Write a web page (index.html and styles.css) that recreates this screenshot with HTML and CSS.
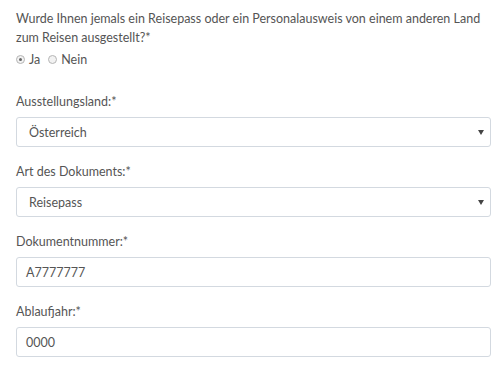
FILE: index.html
```html
<!DOCTYPE html>
<html lang="de">
<head>
<meta charset="utf-8">
<link rel="stylesheet" href="styles.css">
</head>
<body>
<form class="form">
  <p class="question">Wurde Ihnen jemals ein Reisepass oder ein Personalausweis von einem anderen Land zum Reisen ausgestellt?*</p>
  <div class="radios">
    <label class="radio"><span class="dot checked"></span>Ja</label>
    <label class="radio"><span class="dot"></span>Nein</label>
  </div>
  <div class="group">
    <div class="label">Ausstellungsland:*</div>
    <div class="field select"><span class="val">Österreich</span><span class="caret"></span></div>
  </div>
  <div class="group">
    <div class="label">Art des Dokuments:*</div>
    <div class="field select"><span class="val">Reisepass</span><span class="caret"></span></div>
  </div>
  <div class="group">
    <div class="label">Dokumentnummer:*</div>
    <div class="field input"><span class="val">A7777777</span></div>
  </div>
  <div class="group">
    <div class="label">Ablaufjahr:*</div>
    <div class="field input"><span class="val">0000</span></div>
  </div>
</form>
</body>
</html>
```

FILE: styles.css
```css
html, body {
  margin: 0;
  padding: 0;
  background: #fff;
}
body {
  font-family: Lato, "Open Sans", sans-serif;
  font-size: 12.5px;
  color: #555;
}
.form {
  padding: 9px 4px 0 16px;
}
.question {
  margin: 0;
  line-height: 19px;
  width: 480px;
}
.radios {
  display: flex;
  align-items: center;
  gap: 8px;
  height: 19px;
  margin-top: 3px;
  margin-bottom: 23px;
}
.radio {
  display: flex;
  align-items: center;
  gap: 4px;
}
.dot {
  width: 7px;
  height: 7px;
  border: 1px solid #b5b5b5;
  border-radius: 50%;
  background: #f2f2f2;
  position: relative;
  box-sizing: content-box;
}
.dot.checked::after {
  content: "";
  position: absolute;
  left: 2px;
  top: 2px;
  width: 3px;
  height: 3px;
  border-radius: 50%;
  background: #666;
}
.group {
  margin-bottom: 15px;
}
.label {
  line-height: 19px;
  margin-bottom: 6px;
}
.field {
  box-sizing: border-box;
  width: 475px;
  height: 30px;
  border: 1px solid #d3d9e0;
  border-radius: 3px;
  display: flex;
  align-items: center;
  justify-content: space-between;
}
.select {
  padding: 0 6px 0 12px;
}
.input {
  padding: 0 9px;
}
.caret {
  width: 0;
  height: 0;
  border-left: 3px solid transparent;
  border-right: 3px solid transparent;
  border-top: 5px solid #444;
}
```
